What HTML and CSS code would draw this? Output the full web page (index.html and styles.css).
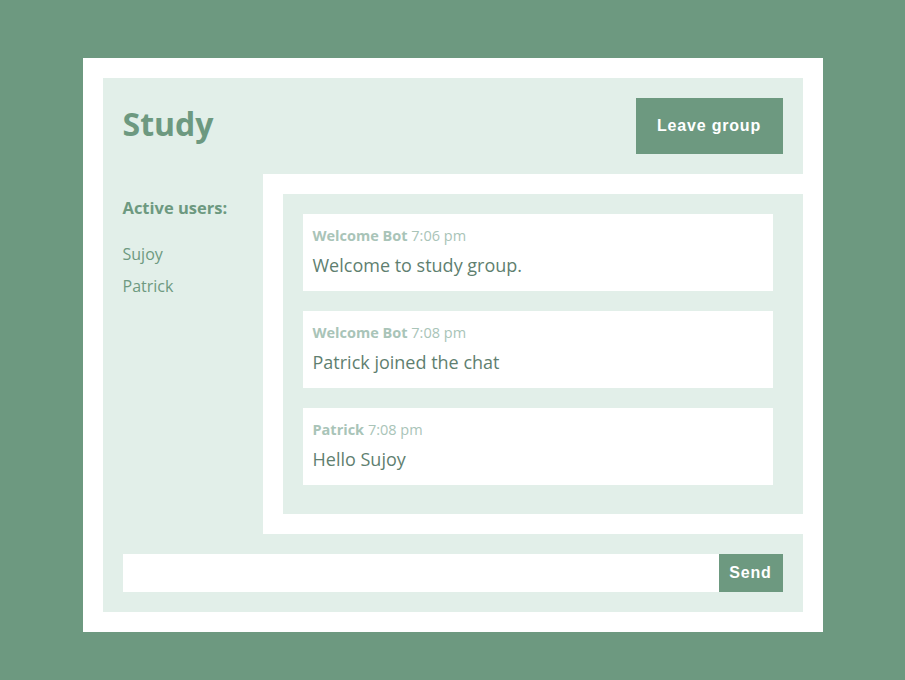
FILE: index.html
```html
<!DOCTYPE html>
<html>
<head>
<meta charset="utf-8">
<link rel="stylesheet" href="styles.css">
</head>
<body>
<div class="chat-container">
  <div class="chat-inner">
    <header class="chat-header">
      <h1 class="title">Study</h1>
      <button class="btn btn-leave">Leave group</button>
    </header>
    <main class="chat-main">
      <aside class="sidebar">
        <h3 class="sidebar-title">Active users:</h3>
        <ul class="users">
          <li>Sujoy</li>
          <li>Patrick</li>
        </ul>
      </aside>
      <section class="chat-area">
        <div class="messages">
          <div class="message">
            <p class="meta"><span class="name">Welcome Bot</span> <span class="time">7:06 pm</span></p>
            <p class="text">Welcome to study group.</p>
          </div>
          <div class="message">
            <p class="meta"><span class="name">Welcome Bot</span> <span class="time">7:08 pm</span></p>
            <p class="text">Patrick joined the chat</p>
          </div>
          <div class="message">
            <p class="meta"><span class="name">Patrick</span> <span class="time">7:08 pm</span></p>
            <p class="text">Hello Sujoy</p>
          </div>
        </div>
      </section>
    </main>
    <form class="chat-form">
      <input class="msg-input" type="text">
      <button class="btn btn-send" type="button">Send</button>
    </form>
  </div>
</div>
</body>
</html>
```
FILE: styles.css
```css
* { box-sizing: border-box; margin: 0; padding: 0; }
body {
  background: #6d9980;
  font-family: "Open Sans", "Noto Sans", sans-serif;
  width: 905px;
  height: 680px;
  padding-top: 58px;
}
.chat-container {
  width: 740px;
  height: 574px;
  margin: 0 auto;
  background: #fff;
  padding: 20px;
}
.chat-inner {
  background: #e2efe9;
  height: 534px;
  display: flex;
  flex-direction: column;
}
.chat-header {
  height: 96px;
  display: flex;
  align-items: center;
  justify-content: space-between;
  padding: 0 20px;
}
.title {
  font-size: 32px;
  font-weight: 700;
  color: #6d9980;
  line-height: 40px;
  margin-bottom: 4px;
}
.btn {
  background: #6d9980;
  color: #fff;
  border: none;
  font-family: "Liberation Sans", Arial, sans-serif;
  font-weight: 700;
  letter-spacing: 0.8px;
}
.btn-leave {
  width: 147px;
  height: 56px;
  font-size: 16px;
}
.chat-main {
  display: flex;
  height: 360px;
}
.sidebar {
  width: 160px;
  padding: 24px 20px;
  color: #6d9980;
}
.sidebar-title {
  font-size: 16.5px;
  font-weight: 700;
  line-height: 20px;
}
.users {
  list-style: none;
  margin-top: 20px;
  font-size: 16px;
}
.users li { line-height: 32px; }
.chat-area {
  flex: 1;
  background: #fff;
  padding: 20px 0 20px 20px;
}
.messages {
  background: #e2efe9;
  height: 320px;
  padding: 20px 30px 20px 20px;
  display: flex;
  flex-direction: column;
  gap: 20px;
}
.message {
  background: #fff;
  height: 77px;
  padding: 12px 10px;
}
.meta {
  font-size: 14.5px;
  line-height: 20px;
  color: #a9c4b8;
}
.name { font-weight: 700; }
.text {
  margin-top: 7px;
  font-size: 18px;
  line-height: 24px;
  color: #5f7f70;
}
.chat-form {
  flex: 1;
  display: flex;
  align-items: center;
  padding: 0 20px;
}
.msg-input {
  flex: 1;
  height: 38px;
  border: none;
  background: #fff;
  outline: none;
}
.btn-send {
  width: 64px;
  height: 38px;
  font-size: 16px;
}
```
